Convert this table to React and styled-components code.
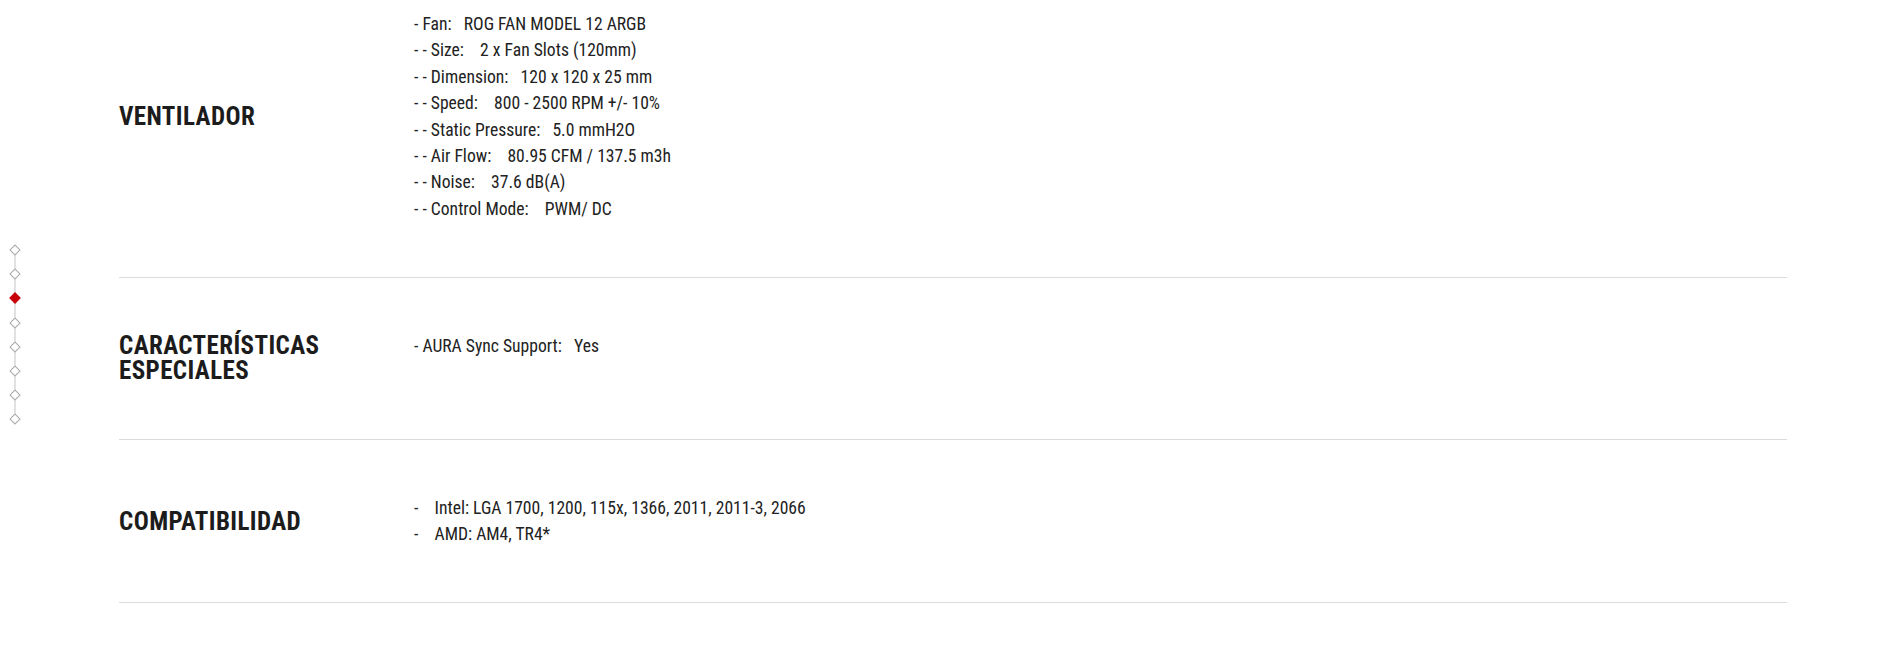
import React from "react";
import styled, { createGlobalStyle } from "styled-components";

const specs = [
  {
    title: "VENTILADOR",
    items: [
      "- Fan:   ROG FAN MODEL 12 ARGB",
      "- - Size:    2 x Fan Slots (120mm)",
      "- - Dimension:   120 x 120 x 25 mm",
      "- - Speed:    800 - 2500 RPM +/- 10%",
      "- - Static Pressure:   5.0 mmH2O",
      "- - Air Flow:    80.95 CFM / 137.5 m3h",
      "- - Noise:    37.6 dB(A)",
      "- - Control Mode:    PWM/ DC",
    ],
  },
  {
    title: "CARACTERÍSTICAS ESPECIALES",
    items: ["- AURA Sync Support:   Yes"],
    trailing: true,
  },
  {
    title: "COMPATIBILIDAD",
    items: ["-    Intel: LGA 1700, 1200, 115x, 1366, 2011, 2011-3, 2066", "-    AMD: AM4, TR4*"],
  },
];

const dots = [false, false, true, false, false, false, false, false];

const App = () => {
  return (
    <>
      <GlobalStyle />
      <SideNav>
        {dots.map((active, i) => (
          <Dot key={i} $active={active} />
        ))}
      </SideNav>
      <Page>
        {specs.map((spec) => (
          <Row key={spec.title}>
            <Title>{spec.title}</Title>
            <List $trailing={spec.trailing}>
              {spec.items.map((item) => (
                <li key={item}>{item}</li>
              ))}
            </List>
          </Row>
        ))}
      </Page>
    </>
  );
};

const GlobalStyle = createGlobalStyle`
  html, body {
    margin: 0;
    background: #fff;
    overflow: hidden;
  }
  body {
    font-family: "Roboto Condensed", Roboto, "Liberation Sans", sans-serif;
    font-stretch: condensed;
    color: #222;
  }
`;

// page is scrolled a little into the spec list
const Page = styled.div`
  margin-top: -44px;
  padding: 0 116px 0 119px;
`;

const Row = styled.section`
  display: grid;
  grid-template-columns: 295px 1fr;
  align-items: center;
  padding: 55px 0;
  border-bottom: 1px solid #dcdcdc;
`;

const Title = styled.h2`
  margin: 0;
  padding-right: 40px;
  font-size: 25px;
  line-height: 25px;
  font-weight: 700;
  letter-spacing: 0.4px;
  color: #1c1c1c;
`;

const List = styled.ul`
  margin: 0;
  padding: 0 0 ${(p) => (p.$trailing ? "24px" : "0")};
  list-style: none;
  font-size: 17.6px;
  line-height: 26.4px;
  white-space: pre;
  color: #222;
`;

const SideNav = styled.nav`
  position: fixed;
  left: 11px;
  top: 246px;
  display: flex;
  flex-direction: column;
  gap: 16.2px;

  &::before {
    content: "";
    position: absolute;
    left: 3px;
    top: 4px;
    bottom: 4px;
    width: 2px;
    background: #e2e2e2;
  }
`;

const Dot = styled.span`
  position: relative;
  width: 8px;
  height: 8px;
  box-sizing: border-box;
  transform: rotate(45deg);
  border: 1px solid ${(p) => (p.$active ? "#c8000a" : "#a8a8a8")};
  background: ${(p) => (p.$active ? "#c8000a" : "#fff")};
`;

export default App;
